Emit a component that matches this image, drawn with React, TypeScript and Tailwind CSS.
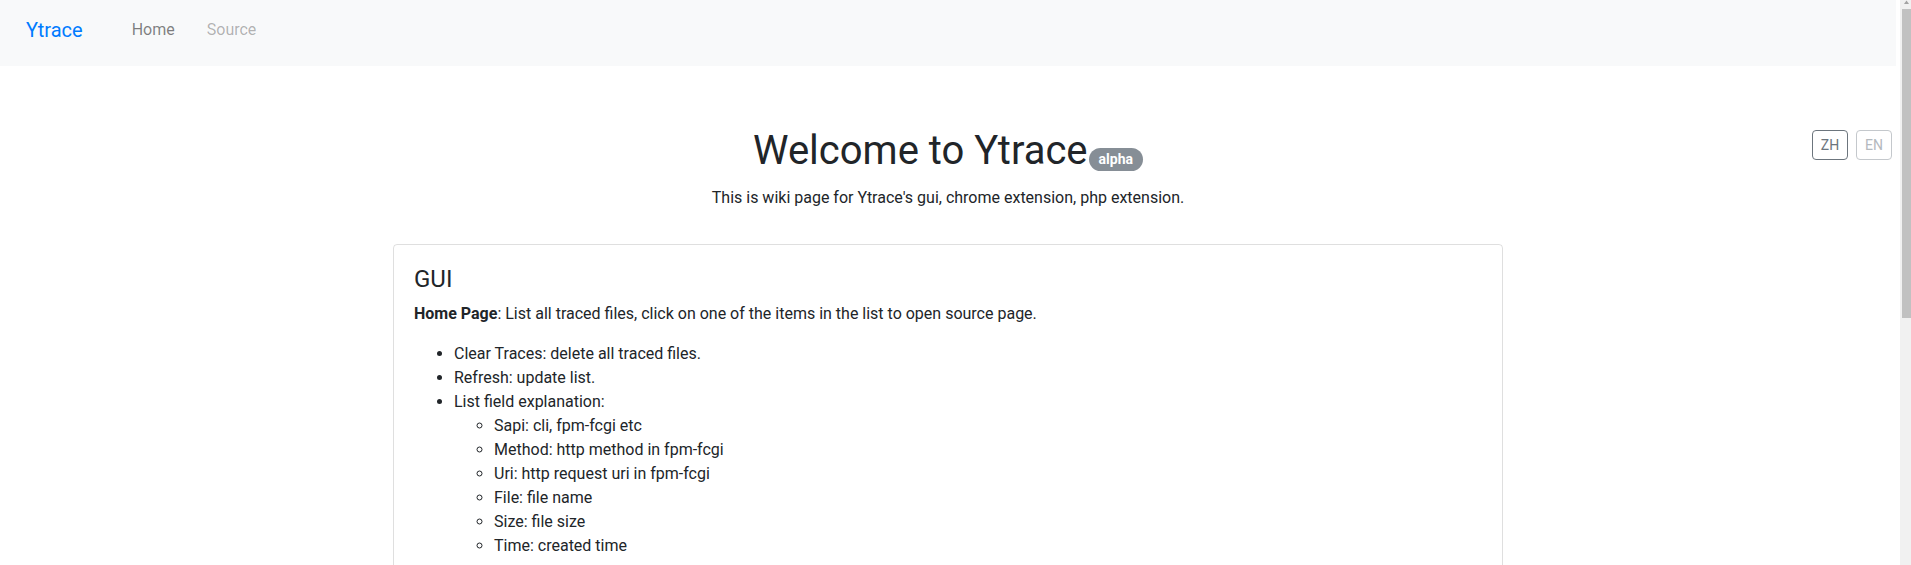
import React from "react";

const fields = [
  "Sapi: cli, fpm-fcgi etc",
  "Method: http method in fpm-fcgi",
  "Uri: http request uri in fpm-fcgi",
  "File: file name",
  "Size: file size",
  "Time: created time",
];

const sourceItems = [
  "Left panel: function call tree of the trace.",
  "Right panel: source code of the selected call.",
  "Click a line to jump to the matching call.",
];

function Scrollbar() {
  return (
    <div className="flex w-[11px] shrink-0 flex-col bg-[#f1f1f1] pl-[2px]">
      <svg width="9" height="4" viewBox="0 0 9 4" className="mb-[5px]">
        <polygon points="2,4 7,4 4.5,0.5" fill="#a3a3a3" />
      </svg>
      <div className="h-[309px] bg-[#c1c1c1]" />
    </div>
  );
}

export default function App() {
  return (
    <div className="flex h-screen overflow-hidden bg-white font-['Roboto','Liberation_Sans',sans-serif] text-base leading-6 text-[#212529]">
      <div className="min-w-0 flex-1">
        <div className="w-[1896px]">
          {/* Navbar */}
          <nav className="flex h-[66px] items-center bg-[#f8f9fa] pb-[6px] pl-[26px]">
            <a className="mr-[33px] text-[20px] leading-[30px] text-[#007bff]">Ytrace</a>
            <a className="px-4 text-[rgba(0,0,0,0.5)]">Home</a>
            <a className="px-4 text-[rgba(0,0,0,0.3)]">Source</a>
          </nav>

          {/* Header */}
          <div className="mt-[61px] grid grid-cols-[1fr_auto_1fr]">
            <div />
            <div className="text-center">
              <h1 className="text-[40px] leading-[48px] font-normal">
                Welcome to Ytrace
                <span className="ml-[1px] inline-block rounded-full bg-[#868e96] px-[10px] text-[14px] leading-[23px] font-bold text-white">
                  alpha
                </span>
              </h1>
              <p className="mt-[11px]">This is wiki page for Ytrace's gui, chrome extension, php extension.</p>
            </div>
            <div className="flex items-start justify-end gap-2 pr-1 pt-[3px]">
              <button className="h-[30px] w-9 rounded border border-[#6c757d] text-[14px] text-[#6c757d]">ZH</button>
              <button className="h-[30px] w-9 rounded border border-[#c4c8cc] text-[14px] text-[#b4b9be]">EN</button>
            </div>
          </div>

          {/* Content */}
          <div className="mx-auto mt-[34px] w-[1110px]">
            <div className="rounded border border-[rgba(0,0,0,0.125)] p-5">
              <h4 className="mb-2 text-[24px] leading-[29px]">GUI</h4>
              <p className="mb-4">
                <b className="font-bold">Home Page</b>: List all traced files, click on one of the items in the list to open source page.
              </p>
              <ul className="mb-4 list-disc pl-10">
                <li>Clear Traces: delete all traced files.</li>
                <li>Refresh: update list.</li>
                <li>
                  List field explanation:
                  <ul className="list-[circle] pl-10">
                    {fields.map((f) => (
                      <li key={f}>{f}</li>
                    ))}
                  </ul>
                </li>
              </ul>
              <p className="mb-4">
                <b className="font-bold">Source Page</b>: Show the traced calls with their source code.
              </p>
              <ul className="list-disc pl-10">
                {sourceItems.map((s) => (
                  <li key={s}>{s}</li>
                ))}
              </ul>
            </div>
          </div>
        </div>
      </div>
      <Scrollbar />
    </div>
  );
}
